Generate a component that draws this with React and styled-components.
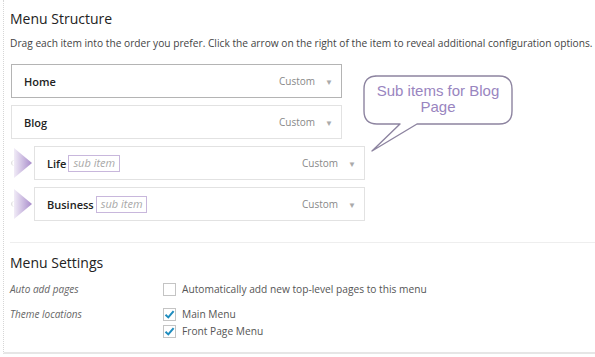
import React from 'react';
import styled, { createGlobalStyle } from 'styled-components';

const GlobalStyle = createGlobalStyle`
  html, body {
    margin: 0;
    padding: 0;
    background: #ffffff;
  }
  body {
    font-family: "Open Sans", "Liberation Sans", sans-serif;
    color: #333;
  }
`;

const menuItems = [
  { title: 'Home', depth: 0, active: true },
  { title: 'Blog', depth: 0 },
  { title: 'Life', depth: 1 },
  { title: 'Business', depth: 1 },
];

const MenuItem = ({ title, depth, active }) => (
  <ItemRow>
    {depth > 0 && (
      <Marker>
        <svg width="23" height="34" viewBox="0 0 23 34">
          <defs>
            <linearGradient id={`mk-${title}`} x1="0" y1="0" x2="1" y2="0">
              <stop offset="0" stopColor="#f1ecf7" />
              <stop offset="1" stopColor="#a88ccb" />
            </linearGradient>
          </defs>
          <path d="M2 14.5 a3 3 0 0 0 0 5" stroke="#d8d8d8" strokeWidth="1" fill="none" />
          <polygon points="3,2 21,17 3,32" fill={`url(#mk-${title})`} />
        </svg>
      </Marker>
    )}
    <ItemBox active={active}>
      <ItemTitle>
        {title}
        {depth > 0 && <SubTag>sub item</SubTag>}
      </ItemTitle>
      <ItemControls>
        <ItemType>Custom</ItemType>
        <Caret>▼</Caret>
      </ItemControls>
    </ItemBox>
  </ItemRow>
);

const Check = ({ checked }) => (
  <CheckBox>
    {checked && (
      <svg width="11" height="11" viewBox="0 0 11 11">
        <path d="M1.5 5.8 L4.3 8.4 L9.6 2.2" stroke="#1e8cbe" strokeWidth="2" fill="none" />
      </svg>
    )}
  </CheckBox>
);

const App = () => {
  return (
    <>
      <GlobalStyle />
      <Panel>
        <Section>
          <Title>Menu Structure</Title>
          <Description>
            Drag each item into the order you prefer. Click the arrow on the right of the item to reveal
            additional configuration options.
          </Description>
          <MenuList>
            {menuItems.map((item) => (
              <MenuItem key={item.title} {...item} />
            ))}
          </MenuList>
          <Callout>
            <svg width="152" height="80" viewBox="0 0 152 80">
              <path
                d="M13 1 H137 Q150 1 150 14 V36 Q150 49 137 49 H55 L10 76 L38 49 H15 Q2 49 2 36 V14 Q2 1 15 1 Z"
                fill="#ffffff"
                stroke="#8d84a0"
                strokeWidth="1.4"
                strokeLinejoin="round"
              />
            </svg>
            <CalloutText>
              Sub items for Blog
              <br />
              Page
            </CalloutText>
          </Callout>
        </Section>
        <Divider />
        <Settings>
          <Title>Menu Settings</Title>
          <SettingsGrid>
            <SettingLabel>Auto add pages</SettingLabel>
            <SettingOptions>
              <Option>
                <Check />
                Automatically add new top-level pages to this menu
              </Option>
            </SettingOptions>
            <SettingLabel>Theme locations</SettingLabel>
            <SettingOptions>
              <Option>
                <Check checked />
                Main Menu
              </Option>
              <Option>
                <Check checked />
                Front Page Menu
              </Option>
            </SettingOptions>
          </SettingsGrid>
        </Settings>
      </Panel>
    </>
  );
};

const Panel = styled.div`
  margin-left: 3px;
  height: 352px;
  border-left: 1px dotted #d6d6d6;
  border-bottom: 2px solid #e6e6e6;
  padding-left: 6px;
  box-sizing: content-box;
`;

const Section = styled.div`
  position: relative;
  padding-top: 9px;
`;

const Title = styled.h3`
  margin: 0;
  font-size: 14px;
  line-height: 20px;
  font-weight: 400;
  color: #222;
`;

const Description = styled.p`
  margin: 6px 0 0;
  font-size: 10.2px;
  line-height: 16px;
  color: #444;
  white-space: nowrap;
`;

const MenuList = styled.div`
  margin-top: 13px;
  display: flex;
  flex-direction: column;
  gap: 7px;
  padding-left: 1px;
`;

const ItemRow = styled.div`
  display: flex;
  align-items: center;
`;

const Marker = styled.div`
  width: 23px;
  height: 34px;
  display: flex;
  align-items: center;
`;

const ItemBox = styled.div`
  width: 331px;
  height: 34px;
  box-sizing: border-box;
  display: flex;
  align-items: center;
  justify-content: space-between;
  padding: 0 8px 0 12px;
  border: 1px solid ${(p) => (p.active ? '#b4b4b4' : '#e2e2e2')};
  background: #fff;
`;

const ItemTitle = styled.div`
  display: flex;
  align-items: center;
  font-size: 11px;
  font-weight: 600;
  color: #222;
`;

const SubTag = styled.span`
  margin-left: 2px;
  padding: 0 4px;
  height: 17px;
  line-height: 14px;
  border: 1.5px solid #c8b7dc;
  font-style: italic;
  font-weight: 400;
  color: #a8a8a8;
  box-sizing: border-box;
  display: inline-flex;
  align-items: center;
`;

const ItemControls = styled.div`
  display: flex;
  align-items: center;
  gap: 10px;
`;

const ItemType = styled.span`
  font-size: 10px;
  color: #888;
`;

const Caret = styled.span`
  font-size: 8px;
  color: #aaa;
`;

const Callout = styled.div`
  position: absolute;
  left: 352px;
  top: 75px;
  width: 152px;
  height: 80px;

  svg {
    position: absolute;
    left: 0;
    top: 0;
  }
`;

const CalloutText = styled.div`
  position: relative;
  padding-top: 8px;
  text-align: center;
  width: 152px;
  font-family: "Liberation Sans", Arial, sans-serif;
  font-size: 15px;
  line-height: 16px;
  color: #9985c0;
`;

const Divider = styled.div`
  margin-top: 21px;
  height: 1px;
  background: #eeeeee;
`;

const Settings = styled.div`
  padding-top: 10px;
`;

const SettingsGrid = styled.div`
  margin-top: 8px;
  display: grid;
  grid-template-columns: 153px 1fr;
  row-gap: 9px;
`;

const SettingLabel = styled.div`
  font-size: 10px;
  line-height: 16px;
  font-style: italic;
  color: #666;
`;

const SettingOptions = styled.div`
  display: flex;
  flex-direction: column;
  gap: 1px;
`;

const Option = styled.label`
  display: flex;
  align-items: center;
  gap: 6px;
  font-size: 10.2px;
  line-height: 16px;
  color: #555;
`;

const CheckBox = styled.span`
  width: 13px;
  height: 13px;
  box-sizing: border-box;
  border: 1px solid #c4c4c4;
  background: #fff;
  display: inline-flex;
  align-items: center;
  justify-content: center;
`;

export default App;
